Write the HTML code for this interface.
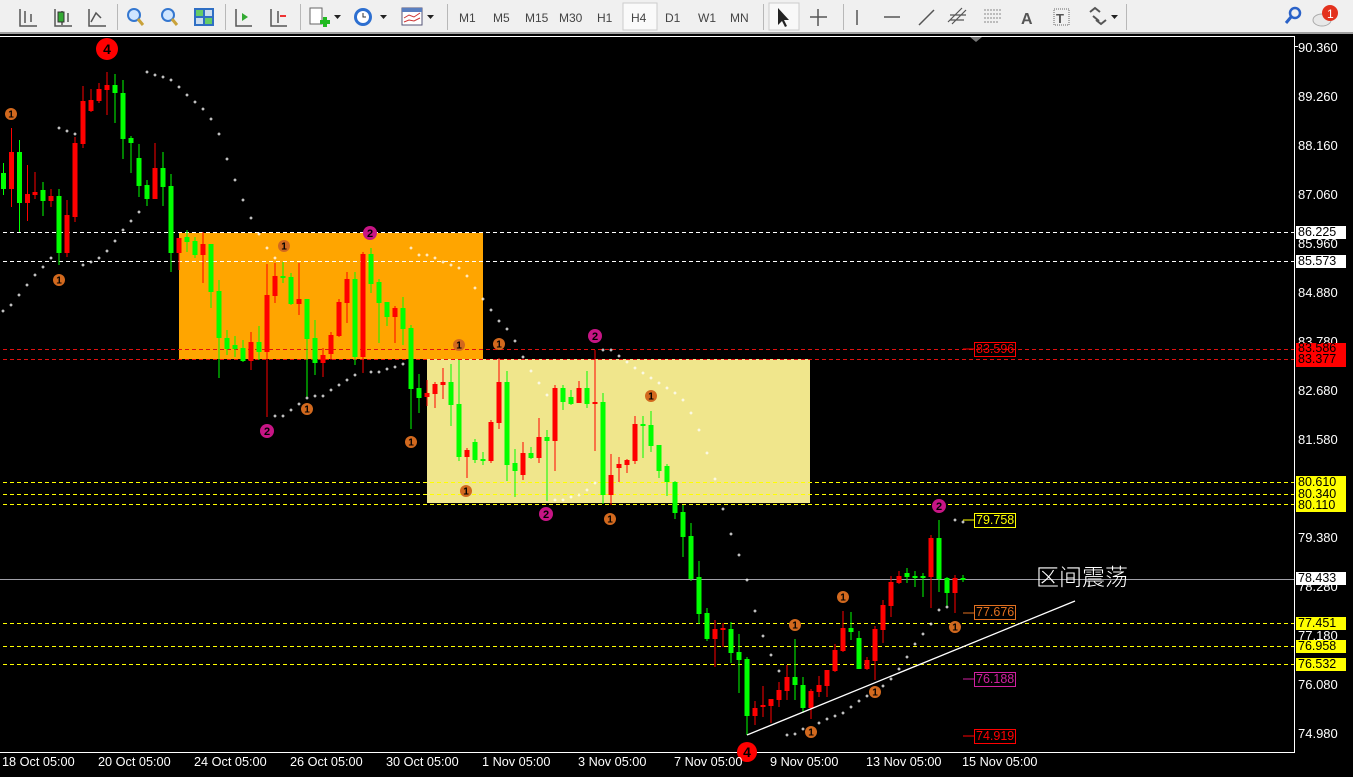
<!DOCTYPE html>
<html><head><meta charset="utf-8">
<style>
*{margin:0;padding:0;box-sizing:border-box}
body{width:1353px;height:777px;overflow:hidden;background:#000;font-family:"Liberation Sans",sans-serif;position:relative}
#tb{position:absolute;left:0;top:0;width:1353px;height:34px;background:#f0f0f0;border-bottom:2px solid #a0a0a0}
.tf{position:absolute;top:11px;font-size:12px;color:#444}
.sep{position:absolute;top:4px;width:1px;height:26px;background:#b8b8b8}
.ax{position:absolute;left:1298px;font-size:13px;color:#fff;line-height:13px}
.bx{position:absolute;left:1296px;width:50px;height:13px;font-size:12.5px;line-height:13px;padding-left:2px;color:#000}
.dt{position:absolute;top:755px;font-size:12.7px;color:#fff}
.lb{position:absolute;font-size:12.5px;line-height:13px;padding:0 1px;border:1px solid}
</style></head><body>
<div id="tb">
<svg width="1353" height="34" style="position:absolute;left:0;top:0">
<g stroke="#555" stroke-width="1.5" fill="none">
<path d="M20 9v17h17M25 11v12M31 14v8"/>
<path d="M55 9v17h17M62 11v14M68 13v9"/>
<path d="M89 9v17h17M91 22l5-9 5 5"/>
</g>
<rect x="58" y="12" width="6" height="10" fill="#3a3" stroke="#333"/>
<circle cx="134" cy="15" r="6" fill="#cfe6ff" stroke="#3477d0" stroke-width="2"/><path d="M138 19l5 6" stroke="#c9a23a" stroke-width="3"/>
<circle cx="168" cy="15" r="6" fill="#cfe6ff" stroke="#3477d0" stroke-width="2"/><path d="M172 19l5 6" stroke="#c9a23a" stroke-width="3"/>
<rect x="194" y="8" width="20" height="18" fill="#2f6fc4"/><rect x="196" y="10" width="7" height="6" fill="#6c6"/><rect x="205" y="18" width="7" height="6" fill="#6c6"/><rect x="205" y="10" width="7" height="6" fill="#cde"/><rect x="196" y="18" width="7" height="6" fill="#cde"/>
<g stroke="#555" stroke-width="1.5" fill="none"><path d="M236 9v17h16"/><path d="M271 9v17h16M278 11v12"/></g>
<path d="M242 13l6 4-6 4z" fill="#3a3"/><path d="M280 16h6" stroke="#e33" stroke-width="2"/>
<rect x="310" y="8" width="12" height="16" fill="#fff" stroke="#666"/><path d="M320 22h10M325 17v10" stroke="#2b2" stroke-width="4"/>
<path d="M334 15h7l-3.5 4z" fill="#222"/>
<circle cx="363" cy="17" r="9" fill="#2d6fd0"/><circle cx="363" cy="17" r="6" fill="#fff"/><path d="M363 13v4h3" stroke="#333" fill="none"/>
<path d="M380 15h7l-3.5 4z" fill="#222"/>
<rect x="402" y="8" width="20" height="17" fill="#fff" stroke="#557"/><rect x="402" y="8" width="20" height="4" fill="#5a7fc0"/><path d="M404 18l5-3 5 2 6-4M404 22l5-2 5 1 6-3" stroke="#c33" fill="none"/>
<path d="M427 15h7l-3.5 4z" fill="#222"/>
<rect x="623" y="3" width="34" height="27" fill="#fafafa" stroke="#ccc"/>
<rect x="769" y="3" width="30" height="27" fill="#f8f8f8" stroke="#ccc"/>
<path d="M778 8v17l4-4 3 6 2-1-3-6h5z" fill="#222"/>
<path d="M818 9v17M810 17h17" stroke="#555" stroke-width="1.5"/>
<path d="M857 10v15M884 17h16M919 25l15-15" stroke="#555" stroke-width="1.5"/>
<path d="M948 22l14-14M952 24l14-14M950 15h16M950 20h14" stroke="#555" stroke-width="1.2"/>
<path d="M984 10h18M984 14h18M984 18h18M984 22h14" stroke="#888" stroke-dasharray="2 1"/>
<text x="1021" y="24" font-size="16" font-weight="bold" fill="#555" font-family="Liberation Sans">A</text>
<rect x="1054" y="9" width="15" height="16" fill="none" stroke="#666" stroke-dasharray="1 1"/><text x="1056" y="23" font-size="13" font-weight="bold" fill="#555" font-family="Liberation Sans">T</text>
<path d="M1090 12l5-4 5 4M1096 20l5 4 5-4M1093 16l6 5" stroke="#555" stroke-width="2" fill="none"/>
<path d="M1111 15h7l-3.5 4z" fill="#222"/>
<circle cx="1295" cy="13" r="5" fill="none" stroke="#2a62c8" stroke-width="2.5"/><path d="M1291 17l-5 6" stroke="#2a62c8" stroke-width="3"/>
<ellipse cx="1322" cy="20" rx="9" ry="6" fill="#e8e8e8" stroke="#aaa"/>
<circle cx="1330" cy="13" r="8" fill="#e3321e"/>
<text x="1327" y="18" font-size="12" fill="#fff" font-family="Liberation Sans">1</text>
</svg>
<div class="sep" style="left:117px"></div><div class="sep" style="left:225px"></div><div class="sep" style="left:300px"></div><div class="sep" style="left:447px"></div><div class="sep" style="left:763px"></div><div class="sep" style="left:843px"></div><div class="sep" style="left:1126px"></div>
<span class="tf" style="left:459px">M1</span><span class="tf" style="left:493px">M5</span><span class="tf" style="left:525px">M15</span><span class="tf" style="left:559px">M30</span><span class="tf" style="left:597px">H1</span><span class="tf" style="left:631px">H4</span><span class="tf" style="left:665px">D1</span><span class="tf" style="left:698px">W1</span><span class="tf" style="left:730px">MN</span>
</div>

<svg id="ch" width="1353" height="777" style="position:absolute;left:0;top:0">
<rect x="0" y="36" width="1295" height="1" fill="#fff"/>
<rect x="1294" y="36" width="1" height="717" fill="#fff"/>
<rect x="0" y="752" width="1295" height="1" fill="#fff"/>
<path d="M970 37h12l-6 5z" fill="#777"/>
<rect x="179" y="233" width="304" height="126" fill="#FFA500"/>
<rect x="427" y="359" width="383" height="144" fill="#F0E68C"/>
<g stroke-dasharray="4 3" stroke-width="1">
<path d="M3 232.5H1294M3 261.5H1294" stroke="#fff"/>
<path d="M3 349.5H1294M3 359.5H1294" stroke="#e01010"/>
<path d="M3 482.5H1294M3 494.5H1294M3 504.5H1294M3 623.5H1294M3 646.5H1294M3 664.5H1294" stroke="#ffff00"/>
</g>
<path d="M0 579.5H1294" stroke="#a0a0a8"/>
<g id="cd"></g>
<g id="sar" fill="#fff"></g>
<path d="M747 735L1075 601" stroke="#fff" stroke-width="1.3"/>
<g font-family="Liberation Sans" font-size="11" font-weight="bold" text-anchor="middle" id="circ"></g>
<g stroke-width="1">
<path d="M963 520h11" stroke="#ff0"/><path d="M963 613h11" stroke="#e07020"/><path d="M963 679h11" stroke="#d020a0"/><path d="M963 736h11" stroke="#f00"/><path d="M963 349h11" stroke="#f00"/>
</g>
<g fill="#fff"><rect x="1294" y="46" width="4" height="1"/></g>
</svg>

<div class="lb" style="left:974px;top:342px;color:#f00;border-color:#f00">83.596</div>
<div class="lb" style="left:974px;top:513px;color:#ff0;border-color:#ff0">79.758</div>
<div class="lb" style="left:974px;top:605px;color:#e07020;border-color:#e07020">77.676</div>
<div class="lb" style="left:974px;top:672px;color:#d020a0;border-color:#d020a0">76.188</div>
<div class="lb" style="left:974px;top:729px;color:#f00;border-color:#f00">74.919</div>
<div style="position:absolute;left:1036px;top:558px;font-size:23px;color:#fff;font-family:'Liberation Sans','Noto Sans CJK SC',sans-serif;font-weight:300">区间震荡</div>

<div class="ax" style="top:41px">90.360</div>
<div class="ax" style="top:90px">89.260</div>
<div class="ax" style="top:139px">88.160</div>
<div class="ax" style="top:188px">87.060</div>
<div class="ax" style="top:237px">85.960</div>
<div class="ax" style="top:286px">84.880</div>
<div class="ax" style="top:335px">83.780</div>
<div class="ax" style="top:384px">82.680</div>
<div class="ax" style="top:433px">81.580</div>
<div class="ax" style="top:531px">79.380</div>
<div class="ax" style="top:580px">78.280</div>
<div class="ax" style="top:629px">77.180</div>
<div class="ax" style="top:678px">76.080</div>
<div class="ax" style="top:727px">74.980</div>
<div class="bx" style="top:226px;background:#fff">86.225</div>
<div class="bx" style="top:255px;background:#fff">85.573</div>
<div class="bx" style="top:343px;background:#f00;height:24px;line-height:11px">83.586<br>83.377</div>
<div class="bx" style="top:476px;background:#ff0">80.610</div>
<div class="bx" style="top:488px;background:#ff0">80.340</div>
<div class="bx" style="top:499px;background:#ff0">80.110</div>
<div class="bx" style="top:572px;background:#fff">78.433</div>
<div class="bx" style="top:617px;background:#ff0">77.451</div>
<div class="bx" style="top:640px;background:#ff0">76.958</div>
<div class="bx" style="top:658px;background:#ff0">76.532</div>

<div class="dt" style="left:2px">18 Oct 05:00</div>
<div class="dt" style="left:98px">20 Oct 05:00</div>
<div class="dt" style="left:194px">24 Oct 05:00</div>
<div class="dt" style="left:290px">26 Oct 05:00</div>
<div class="dt" style="left:386px">30 Oct 05:00</div>
<div class="dt" style="left:482px">1 Nov 05:00</div>
<div class="dt" style="left:578px">3 Nov 05:00</div>
<div class="dt" style="left:674px">7 Nov 05:00</div>
<div class="dt" style="left:770px">9 Nov 05:00</div>
<div class="dt" style="left:866px">13 Nov 05:00</div>
<div class="dt" style="left:962px">15 Nov 05:00</div>

<script>
var C=[
[3.5,'G',173,189,163,195],[11.5,'R',152,189,128,207],[19.5,'G',152,203,140,232],[27.5,'R',194,203,165,221],[35,'R',192,195,172,199],[43,'G',190,201,182,216],[51,'R',196,201,189,207],[59,'G',196,253,189,265],[67,'R',215,253,200,257],[75,'R',143,217,137,222],[83,'R',101,144,86,148],[91,'R',100,111,89,112],[99,'R',89,101,83,103],[107,'R',85,90,72,115],[115,'G',85,93,74,123],[123,'G',93,139,80,159],[131,'G',138,143,136,173],[139,'G',158,186,144,197],[147,'G',185,199,180,206],[155,'R',168,199,143,199],[163,'G',168,187,152,206],[171,'G',186,253,174,272],[179,'R',238,253,238,270],[187,'G',237,242,230,252],[195,'G',241,255,237,258],[203,'R',244,255,232,283],[211,'G',244,292,244,308],[219,'G',291,338,280,378],[227,'G',338,349,330,355],[235,'G',345,349,336,357],[243,'G',348,361,340,362],[251,'R',342,361,332,370],[259,'G',342,352,326,360],[267,'R',295,352,264,417],[275,'R',276,296,263,303],[283,'G',276,278,262,283],[291,'G',277,304,273,305],[299,'R',299,304,263,315],[307,'G',299,339,299,398],[315,'G',338,363,320,375],[323,'R',355,363,348,377],[331,'R',335,354,332,360],[339,'R',302,336,299,337],[347,'R',279,303,272,323],[355,'G',279,357,272,365],[363,'R',254,357,252,373],[371,'G',254,284,248,293],[379,'G',282,303,279,343],[387,'G',302,317,302,326],[395,'R',308,317,306,343],[403,'G',308,329,297,345],[411,'G',328,389,325,429],
[419,'G',388,398,374,413],[427,'R',393,397,380,406],[435,'R',384,394,382,408],[443,'R',382,385,368,399],[451,'G',382,405,364,426],[459,'G',404,457,360,461],[467,'R',450,457,448,478],[475,'G',442,460,439,463],[483,'G',459,461,452,465],[491,'R',422,461,420,463],[499,'R',382,423,358,429],[507,'G',382,465,371,481],[515,'G',463,471,449,497],[523,'R',453,475,442,480],[531,'G',453,458,447,459],[539,'R',437,458,418,463],[547,'G',437,441,430,501],[555,'R',388,441,385,471],[563,'G',388,402,385,410],[571,'G',397,404,390,405],[579,'R',388,403,381,403],[587,'G',388,404,371,408],[595,'R',402,404,350,451],[603,'G',402,495,393,504],[611,'R',475,495,454,505],[619,'R',464,468,457,482],[627,'R',460,465,459,473],[635,'R',424,461,416,464],[643,'G',424,426,416,458],[651,'G',425,446,411,452],[659,'G',445,471,445,478],[667,'G',466,482,464,496],[675,'G',482,513,481,519],[683,'G',512,537,505,557],[691,'G',536,579,523,581],[699,'G',577,614,561,624],[707,'G',613,639,608,641],[715,'R',629,639,620,667],[723,'R',628,630,623,647],[731,'G',629,653,622,663],[739,'G',652,660,634,693],[747,'G',659,716,657,735],[755,'R',708,716,701,725],[763,'R',705,707,686,717],[771,'R',699,706,699,723],[779,'R',690,700,682,707],[787,'R',677,691,665,700],[795,'G',677,685,639,700],[803,'G',685,708,677,713],[811,'R',691,708,689,719],[819,'R',685,692,676,697],[827,'R',670,686,670,697],[835,'R',650,671,644,672],[843,'R',628,651,611,652],[851,'G',628,632,612,640],[859,'G',638,669,631,669],[867,'R',660,669,657,670],[875,'R',629,661,626,680],[883,'R',605,630,600,643],[891,'R',582,606,576,617],[899,'R',576,583,571,584],[907,'G',573,577,568,583],[915,'G',576,577,571,587],[923,'G',576,577,573,597],[931,'R',538,577,535,608],[939,'G',538,579,520,592],[947,'G',578,593,577,608],[955,'R',578,593,575,613],[963,'G',578,579,575,582]];
var s='';
C.forEach(function(c){var col=c[1]=='G'?'#00ff00':'#ff0000';var x=c[0];
s+='<rect x="'+(x-0.5)+'" y="'+c[4]+'" width="1" height="'+(c[5]-c[4])+'" fill="'+col+'"/>';
var h=Math.max(2,c[3]-c[2]);s+='<rect x="'+(x-2.5)+'" y="'+c[2]+'" width="5" height="'+h+'" fill="'+col+'"/>';});
document.getElementById('cd').innerHTML=s;
var D=[[147,72],[155,75],[163,77],[171,80],[179,87],[187,95],[195,102],[203,109],[211,119],[219,134],[227,159],[235,180],[243,200],[251,218],[259,234],[267,248],[275,258],
[411,248],[419,255],[427,255],[435,258],[443,262],[451,265],[459,268],[467,276],[475,288],[483,299],[491,310],[499,321],[507,329],[515,341],[523,357],[531,371],[539,383],[547,395],
[603,350],[611,350],[619,356],[627,362],[635,368],[643,373],[651,378],[659,383],[667,388],[675,393],[683,400],[691,413],[699,430],[707,453],[715,479],[723,509],[731,534],[739,555],[747,580],[755,611],[763,636],[771,655],[779,671],
[3,311],[11,305],[19,295],[27,285],[35,275],[43,267],[51,258],[59,128],[67,131],[75,134],[83,265],[91,262],[99,258],[107,251],[115,241],[123,230],[131,221],[139,212],
[275,416],[283,416],[291,410],[299,404],[307,398],[315,396],[323,396],[331,390],[339,385],[347,380],[355,375],[371,372],[379,372],[387,369],[395,367],[403,364],
[555,500],[563,500],[571,497],[579,495],[587,490],[595,483],
[787,735],[795,734],[803,729],[819,723],[827,719],[835,716],[843,713],[851,707],[859,701],[867,696],[875,691],[883,686],[891,679],[899,669],[907,657],[915,644],[923,634],[931,624],[939,610],[947,607],[955,520],[963,522]];
s='';D.forEach(function(d){s+='<rect x="'+(d[0]-1.5)+'" y="'+(d[1]-0.5)+'" width="3" height="1"/><rect x="'+(d[0]-0.5)+'" y="'+(d[1]-1.5)+'" width="1" height="3"/>';});
document.getElementById('sar').innerHTML=s;
var K=[[107,49,'#ff0000','4',11,14],[747,752,'#ff0000','4',10,14]];
[[11,114],[59,280],[284,246],[307,409],[411,442],[459,345],[499,344],[466,491],[610,519],[651,396],[795,625],[843,597],[875,692],[811,732],[955,627]].forEach(function(p){K.push([p[0],p[1],'#d2691e','1',6,10]);});
[[370,233],[267,431],[595,336],[546,514],[939,506]].forEach(function(p){K.push([p[0],p[1],'#c71585','2',7,11]);});
s='';K.forEach(function(k){s+='<circle cx="'+k[0]+'" cy="'+k[1]+'" r="'+k[4]+'" fill="'+k[2]+'"/><text x="'+k[0]+'" y="'+(k[1]+k[5]*0.36)+'" font-size="'+k[5]+'" fill="#000">'+k[3]+'</text>';});
document.getElementById('circ').innerHTML=s;
</script>
</body></html>
